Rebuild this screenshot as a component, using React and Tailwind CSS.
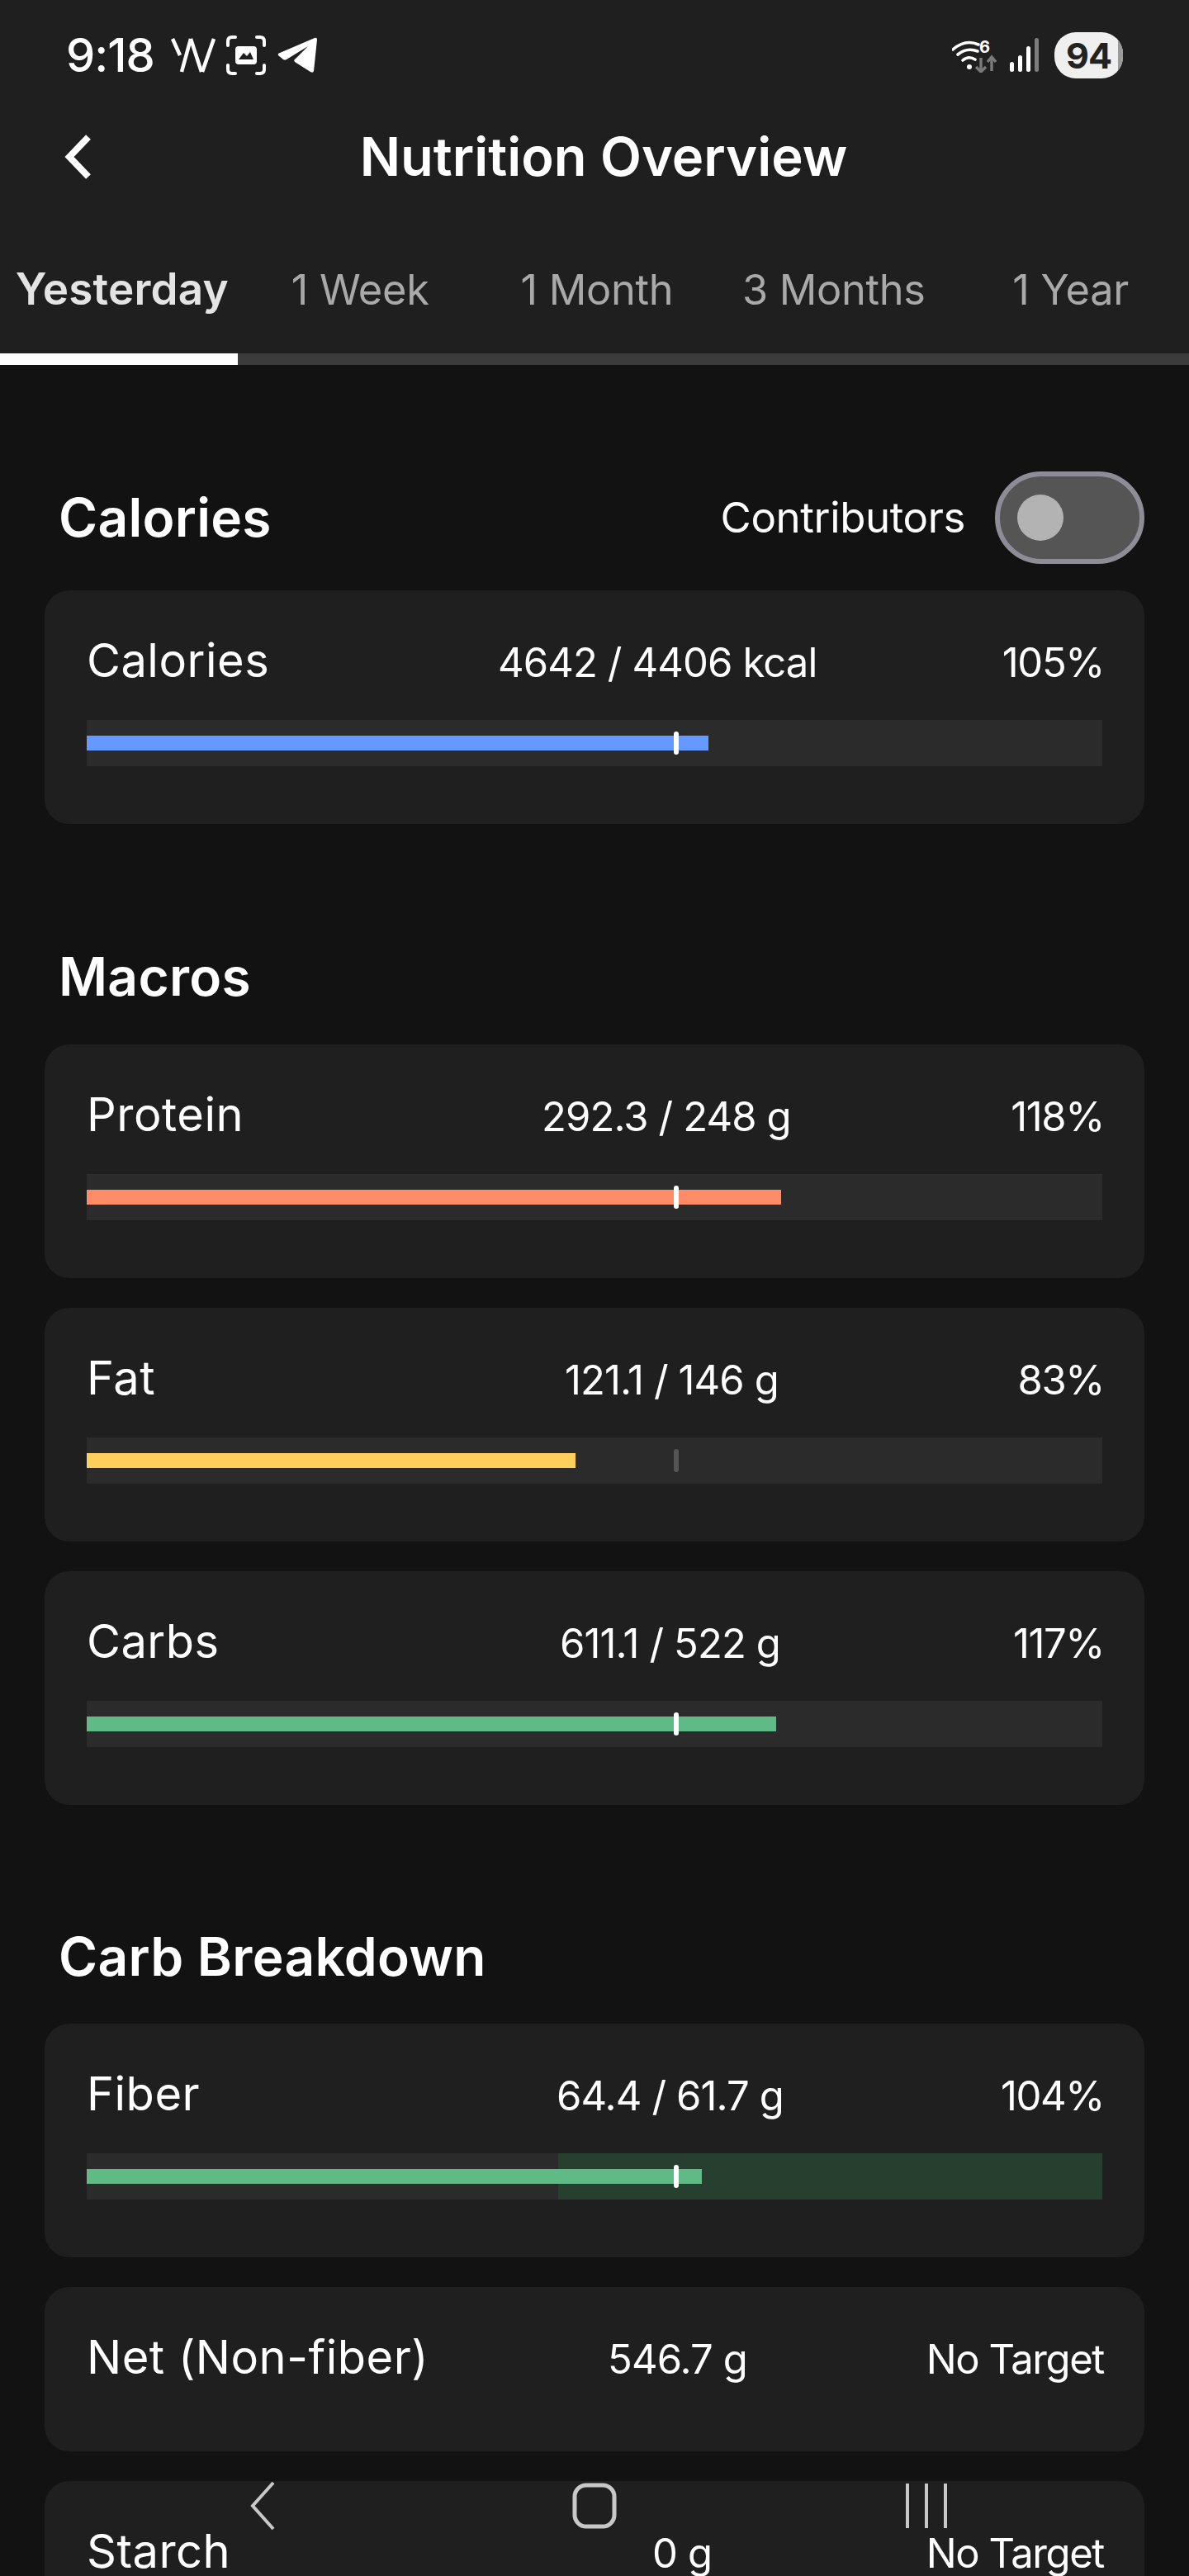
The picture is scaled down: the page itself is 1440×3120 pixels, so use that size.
import React from "react";

const font = { fontFamily: '"Inter", "Noto Sans", sans-serif' };

function WIcon() {
  return (
    <svg width="54" height="42" viewBox="0 0 54 42" fill="none" stroke="white" strokeWidth="4.5" className="ml-[20px]">
      <path d="M2 1 L11 21" />
      <path d="M24 1 L13 41" />
      <path d="M24 1 L37 41" />
      <path d="M52 1 L38 41" />
    </svg>
  );
}

function FocusIcon() {
  return (
    <svg width="48" height="48" viewBox="0 0 48 48" fill="none" className="ml-[13px]">
      <g stroke="white" strokeWidth="4" strokeLinecap="round">
        <path d="M2 12 V7 Q2 2 7 2 H11" />
        <path d="M37 2 H41 Q46 2 46 7 V12" />
        <path d="M2 36 V41 Q2 46 7 46 H11" />
        <path d="M37 46 H41 Q46 46 46 41 V36" />
      </g>
      <rect x="11" y="13" width="26" height="22" rx="4" fill="white" />
      <path d="M15 29 L21 21 L25 25 L29 20 L33 29 Z" fill="#1f1f1f" />
    </svg>
  );
}

function PlaneIcon() {
  return (
    <svg width="50" height="44" viewBox="0 0 50 44" className="ml-[13px]">
      <path d="M2 22 Q1 20 4 19 L46 1 Q49 0 49 3 L45 41 Q44 44 41 42 L22 30 Q20 28 23 26 L38 11 L12 27 Q10 28 8 27 Z" fill="white" />
    </svg>
  );
}

function WifiIcon() {
  return (
    <svg width="58" height="42" viewBox="0 0 58 42" fill="none">
      <g stroke="white" strokeWidth="3.6" strokeLinecap="round">
        <path d="M1 14 Q16 1 32 8" />
        <path d="M7 20 Q18 11 31 16" />
        <path d="M13 27 Q20 21 28 26" />
      </g>
      <circle cx="21" cy="35" r="3" fill="white" />
      <text x="33" y="18" fill="white" fontSize="20" fontWeight="700" style={font}>6</text>
      <g stroke="#7a7a7a" strokeWidth="3.4" fill="none">
        <path d="M35 24 V41" />
        <path d="M29 35 L35 41 L41 35" />
        <path d="M48 40 V23" />
        <path d="M43 29 L48 23 L53 29" />
      </g>
    </svg>
  );
}

function SignalIcon() {
  return (
    <svg width="36" height="42" viewBox="0 0 36 42" className="ml-[12px]">
      <rect x="0" y="29" width="5" height="12" rx="2.5" fill="white" />
      <rect x="10" y="21" width="5" height="20" rx="2.5" fill="white" />
      <rect x="20" y="10" width="5" height="31" rx="2.5" fill="white" />
      <rect x="30" y="0" width="5" height="41" rx="2.5" fill="#7d7d7d" />
    </svg>
  );
}

function Row({ name, value, pct, nameW, fill, color, track, tick, small, zone }) {
  return (
    <div className={`bg-[#1f1f1f] rounded-[30px] pl-[51px] pr-[52px] pt-[56px] ${small ? "h-[199px]" : "h-[283px]"}`}>
      <div className="flex items-center h-[58px] text-white whitespace-nowrap">
        <div className={`text-[56px] leading-[58px] tracking-[0.5px] ${nameW}`}>{name}</div>
        <div className="text-[49px] leading-[58px] tracking-[-0.9px] mt-[5px]">{value}</div>
        <div className="ml-auto -mr-[3px] text-[49px] leading-[58px] tracking-[-1.4px] mt-[5px]">{pct}</div>
      </div>
      {track && (
        <div className="relative h-[56px] w-[1230px] mt-[43px] bg-[#2b2b2b]">
          {zone && <div className="absolute left-[571px] top-0 bottom-0 right-0 bg-[#273f2f]" />}
          <div className={`absolute left-0 top-[19px] h-[18px] ${fill} ${color}`} />
          <div className={`absolute left-[711px] top-[14px] h-[28px] w-[6px] rounded-full ${tick}`} />
        </div>
      )}
    </div>
  );
}

function Section({ title, right, children, top }) {
  return (
    <section className={top}>
      <div className="flex items-center justify-between h-[112px] pl-[17px] pr-0">
        <h2 className="text-[64px] font-semibold tracking-[0.3px] text-white">{title}</h2>
        {right}
      </div>
      <div className="flex flex-col gap-[36px]">{children}</div>
    </section>
  );
}

export default function App() {
  return (
    <div style={font} className="relative w-[1440px] h-[3120px] overflow-hidden bg-[#121212]">
      <header className="bg-[#1f1f1f]">
        <div className="flex items-center h-[134px] pl-[80px] pr-[80px]">
          <span className="text-[56px] font-medium text-white tracking-[-1px]">9:18</span>
          <WIcon />
          <FocusIcon />
          <PlaneIcon />
          <div className="ml-auto flex items-center">
            <WifiIcon />
            <SignalIcon />
            <div className="ml-[18px] relative w-[83px] h-[56px] rounded-[26px] bg-[#efefef] overflow-hidden flex items-center justify-center">
              <div className="absolute right-0 top-0 bottom-0 w-[6px] bg-[#9a9a9a]" />
              <span className="relative text-[43px] font-bold text-[#222222] tracking-[-1px]">94</span>
            </div>
          </div>
        </div>
        <div className="relative flex items-center justify-center h-[112px]">
          <svg width="40" height="56" viewBox="0 0 40 56" fill="none" className="absolute left-[76px] top-[28px]">
            <path d="M31 4 L8 28 L31 52" stroke="white" strokeWidth="8" />
          </svg>
          <h1 className="text-[65px] font-semibold tracking-[0px] text-white ml-[22px]">Nutrition Overview</h1>
        </div>
        <div className="grid grid-cols-5 h-[182px] pl-[6px] pt-[28px] items-center text-center text-[50.5px] tracking-[-0.3px] text-[#a9a9a9] whitespace-nowrap">
          <div className="text-[53px] font-semibold tracking-[0.2px] text-[#e4e4e4] -ml-[3px]">Yesterday</div>
          <div>1 Week</div>
          <div>1 Month</div>
          <div>3 Months</div>
          <div>1 Year</div>
        </div>
        <div className="flex h-[14px] bg-[#3c3c3c]">
          <div className="w-[288px] bg-white" />
        </div>
      </header>

      <main className="px-[54px]">
        <Section
          top="pt-[129px]"
          title="Calories"
          right={
            <div className="flex items-center">
              <span className="text-[51px] text-white tracking-[-0.4px]">Contributors</span>
              <div className="ml-[36px] w-[181px] h-[112px] rounded-[56px] border-[6px] border-[#8e8c97] bg-[#555555] flex items-center pl-[21px]">
                <div className="w-[56px] h-[56px] rounded-full bg-[#b3b3b3]" />
              </div>
            </div>
          }
        >
          <div className="mt-[32px]">
            <Row name="Calories" value="4642 / 4406 kcal" pct="105%" nameW="w-[498px]" track fill="w-[753px]" color="bg-[#6699ff]" tick="bg-white" />
          </div>
        </Section>

        <Section top="mt-[129px]" title="Macros">
          <div className="mt-[26px] flex flex-col gap-[36px]">
            <Row name="Protein" value="292.3 / 248 g" pct="118%" nameW="w-[551px]" track fill="w-[841px]" color="bg-[#ff8c66]" tick="bg-white" />
            <Row name="Fat" value="121.1 / 146 g" pct="83%" nameW="w-[579px]" track fill="w-[592px]" color="bg-[#ffcf5c]" tick="bg-[#555555]" />
            <Row name="Carbs" value="611.1 / 522 g" pct="117%" nameW="w-[573px]" track fill="w-[835px]" color="bg-[#5fba86]" tick="bg-white" />
          </div>
        </Section>

        <Section top="mt-[128px]" title="Carb Breakdown">
          <div className="mt-[25px] flex flex-col gap-[36px]">
            <Row name="Fiber" value="64.4 / 61.7 g" pct="104%" nameW="w-[569px]" track zone fill="w-[745px]" color="bg-[#5fba86]" tick="bg-white" />
            <Row name="Net (Non-fiber)" value="546.7 g" pct="No Target" nameW="w-[631px]" small />
            <Row name="Starch" value="0 g" pct="No Target" nameW="w-[685px]" small />
          </div>
        </Section>
      </main>

      <svg width="32" height="60" viewBox="0 0 32 60" fill="none" className="absolute left-[302px] top-[3005px]">
        <path d="M29 2 L4 30 L29 58" stroke="#c8c8c8" strokeWidth="4" />
      </svg>
      <svg width="54" height="56" viewBox="0 0 54 56" fill="none" className="absolute left-[693px] top-[3007px]">
        <rect x="3" y="3" width="48" height="50" rx="14" stroke="#c8c8c8" strokeWidth="5" />
      </svg>
      <svg width="52" height="56" viewBox="0 0 52 56" fill="none" className="absolute left-[1096px] top-[3007px]">
        <path d="M3 1 V55 M26 1 V55 M49 1 V55" stroke="#c8c8c8" strokeWidth="4" />
      </svg>
    </div>
  );
}
